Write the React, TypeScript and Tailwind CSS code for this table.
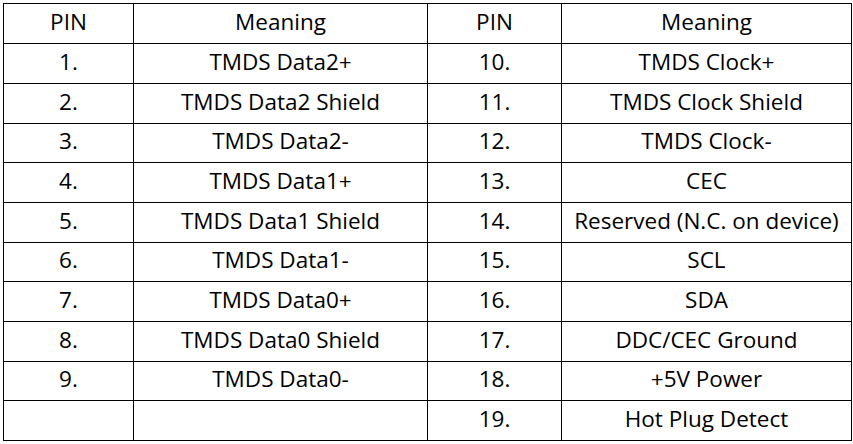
const rows: [string, string, string, string][] = [
  ["1.", "TMDS Data2+", "10.", "TMDS Clock+"],
  ["2.", "TMDS Data2 Shield", "11.", "TMDS Clock Shield"],
  ["3.", "TMDS Data2-", "12.", "TMDS Clock-"],
  ["4.", "TMDS Data1+", "13.", "CEC"],
  ["5.", "TMDS Data1 Shield", "14.", "Reserved (N.C. on device)"],
  ["6.", "TMDS Data1-", "15.", "SCL"],
  ["7.", "TMDS Data0+", "16.", "SDA"],
  ["8.", "TMDS Data0 Shield", "17.", "DDC/CEC Ground"],
  ["9.", "TMDS Data0-", "18.", "+5V Power"],
  ["", "", "19.", "Hot Plug Detect"],
];

const heights = ["h-[40px]", "h-[40px]", "h-[39px]", "h-[40px]", "h-[40px]", "h-[39px]", "h-[40px]", "h-[40px]", "h-[39px]", "h-[40px]"];

export default function App() {
  return (
    <div className="w-[853px] h-[444px] bg-white pt-[3px] pl-[3px] font-['Open_Sans',sans-serif] text-[22.5px] leading-none text-black">
      <table className="border-collapse table-fixed w-[848px]">
        <colgroup>
          <col className="w-[130px]" />
          <col className="w-[294px]" />
          <col className="w-[134px]" />
          <col className="w-[290px]" />
        </colgroup>
        <thead>
          <tr className="h-[40px]">
            <th className="border border-black font-normal text-center p-0 pb-[3px]">PIN</th>
            <th className="border border-black font-normal text-center p-0 pb-[3px]">Meaning</th>
            <th className="border border-black font-normal text-center p-0 pb-[3px]">PIN</th>
            <th className="border border-black font-normal text-center p-0 pb-[3px]">Meaning</th>
          </tr>
        </thead>
        <tbody>
          {rows.map((r, i) => (
            <tr key={i} className={heights[i]}>
              {r.map((c, j) => (
                <td key={j} className="border border-black text-center p-0 pb-[3px] whitespace-nowrap">
                  {c}
                </td>
              ))}
            </tr>
          ))}
        </tbody>
      </table>
    </div>
  );
}
